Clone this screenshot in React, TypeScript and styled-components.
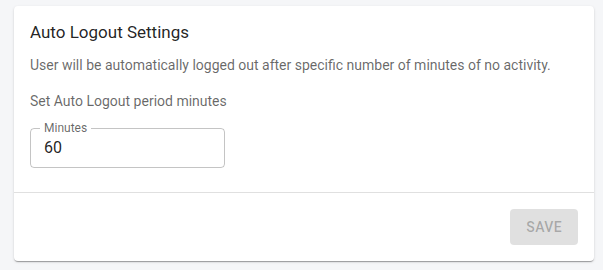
import React from "react";
import styled, { createGlobalStyle } from "styled-components";

const Global = createGlobalStyle`
  html, body { margin: 0; padding: 0; background: #f5f6f8; }
  body { font-family: Roboto, "Noto Sans", Arial, sans-serif; -webkit-font-smoothing: antialiased; }
`;

const Page = styled.div`
  padding: 6px 9px 7px 14px;
`;

const Card = styled.section`
  background: #fff;
  border-radius: 4px;
  box-shadow: 0 2px 1px -1px rgba(0,0,0,0.2), 0 1px 1px 0 rgba(0,0,0,0.14), 0 1px 3px 0 rgba(0,0,0,0.12);
  display: flex;
  flex-direction: column;
`;

const Body = styled.div`
  padding: 16px 16px 24px 16px;
  display: flex;
  flex-direction: column;
`;

const Title = styled.h2`
  margin: 0;
  font-size: 17px;
  line-height: 20px;
  font-weight: 400;
  color: rgba(0,0,0,0.87);
`;

const Text = styled.p<{ $mt: number }>`
  margin: ${(p) => p.$mt}px 0 0 0;
  font-size: 14px;
  line-height: 20px;
  color: rgba(0,0,0,0.6);
`;

const Field = styled.div`
  margin-top: 17px;
  width: 195px;
  height: 40px;
  box-sizing: border-box;
  border: 1px solid rgba(0,0,0,0.23);
  border-radius: 4px;
  padding: 0 13px;
  position: relative;
  display: flex;
  align-items: center;
`;

const Label = styled.label`
  position: absolute;
  left: 9px;
  top: -7px;
  font-size: 12px;
  line-height: 12px;
  color: rgba(0,0,0,0.6);
  padding: 0 4px;
  background: #fff;
`;

const Input = styled.input`
  border: none;
  outline: none;
  padding: 0;
  margin: 0;
  width: 100%;
  font-family: inherit;
  font-size: 16px;
  line-height: 20px;
  height: 20px;
  color: rgba(0,0,0,0.87);
  background: transparent;
`;

const Divider = styled.hr`
  margin: 0;
  border: none;
  border-top: 1px solid rgba(0,0,0,0.12);
`;

const Footer = styled.div`
  display: flex;
  justify-content: flex-end;
  padding: 16px;
`;

const Button = styled.button`
  height: 36px;
  min-width: 66px;
  padding: 0 16px;
  border: none;
  border-radius: 4px;
  background: rgba(0,0,0,0.12);
  color: rgba(0,0,0,0.26);
  font-family: inherit;
  font-size: 14px;
  font-weight: 500;
  letter-spacing: 0.4px;
  text-transform: uppercase;
`;

export default function App() {
  return (
    <>
      <Global />
      <Page>
        <Card>
          <Body>
            <Title>Auto Logout Settings</Title>
            <Text $mt={13}>User will be automatically logged out after specific number of minutes of no activity.</Text>
            <Text $mt={16}>Set Auto Logout period minutes</Text>
            <Field>
              <Label htmlFor="minutes">Minutes</Label>
              <Input id="minutes" defaultValue="60" />
            </Field>
          </Body>
          <Divider />
          <Footer>
            <Button disabled>Save</Button>
          </Footer>
        </Card>
      </Page>
    </>
  );
}
